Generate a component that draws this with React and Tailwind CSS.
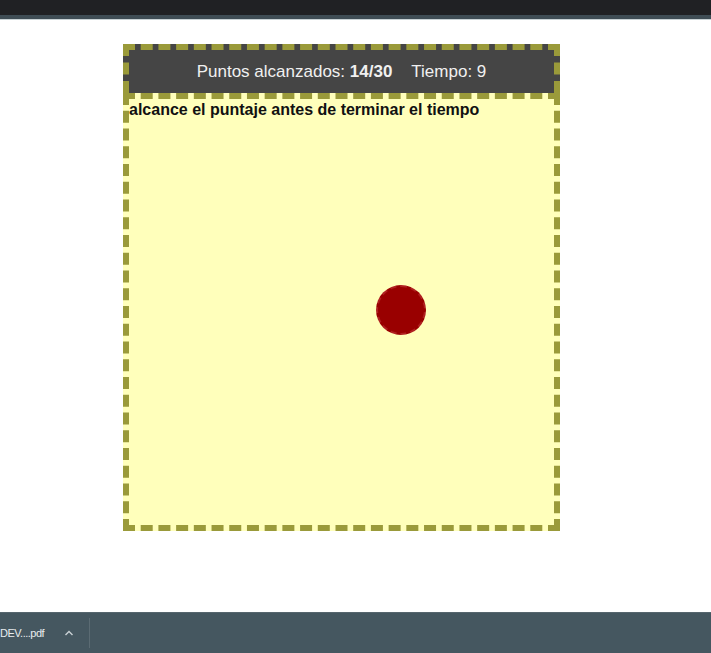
import React from 'react';

export default function App() {
  return (
    <div className="h-[653px] w-[711px] flex flex-col bg-white overflow-hidden" style={{ fontFamily: '"Liberation Sans", Arial, sans-serif' }}>
      <div className="h-[15px] bg-[#202124]" />
      <div className="h-[4px] bg-[#3f4d55]" />
      <div className="h-[1px] bg-[#c9d3d6]" />

      <div className="flex-1 pl-[123px] pt-[24px]">
        <div className="w-[437px]">
          <div className="h-[49px] border-[6px] border-b-0 border-dashed border-[#9a9a3a] bg-[#454545] flex items-center justify-center gap-[19px] text-[17px] text-[#f0f0f0]">
            <span>Puntos alcanzados: <b>14/30</b></span>
            <span>Tiempo: 9</span>
          </div>
          <div className="relative h-[438px] border-[6px] border-dashed border-[#9a9a3a] bg-[#ffffbb]">
            <div className="text-[16px] font-bold text-[#111] leading-[21px]">alcance el puntaje antes de terminar el tiempo</div>
            <div className="absolute left-[247px] top-[186px] w-[50px] h-[50px] rounded-full bg-[#990000] border-[2px] border-dashed border-[#b02020]" />
          </div>
        </div>
      </div>

      <div className="h-[41px] bg-[#455760] border-t border-[#56666e] flex items-center text-[11px] text-[#e8ecee]">
        <span className="tracking-[-0.5px]">DEV....pdf</span>
        <svg className="ml-[20px]" width="10" height="8" viewBox="0 0 10 8" fill="none" stroke="#c9d1d4" strokeWidth="1.4">
          <path d="M1.5 6 L5 2.5 L8.5 6" />
        </svg>
        <div className="ml-[15px] w-[1px] h-[30px] bg-[#5b6b73]" />
      </div>
    </div>
  );
}
